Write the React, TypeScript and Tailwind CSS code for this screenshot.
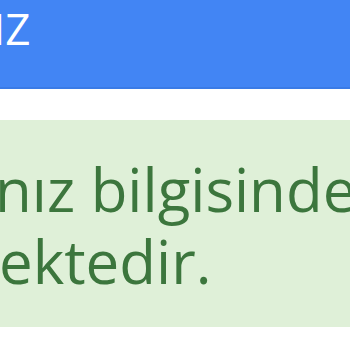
export default function App() {
  return (
    <div className="h-[350px] w-[350px] overflow-hidden bg-white font-['Open_Sans',sans-serif]">
      <header className="h-[89px] overflow-hidden border-b-2 border-[#3a7be6] bg-[#4285f4]">
        <p className="-ml-[7px] whitespace-nowrap text-[44px] leading-[56px] text-white">IZ</p>
      </header>
      <div className="mt-[31px] h-[207px] overflow-hidden whitespace-nowrap bg-[#dff0d8] pt-[33px] text-[60px] leading-[72px] text-[#3c763d]">
        <p className="-ml-[5px]">nız bilgisinden</p>
        <p className="-ml-[1px]">ektedir.</p>
      </div>
    </div>
  );
}
